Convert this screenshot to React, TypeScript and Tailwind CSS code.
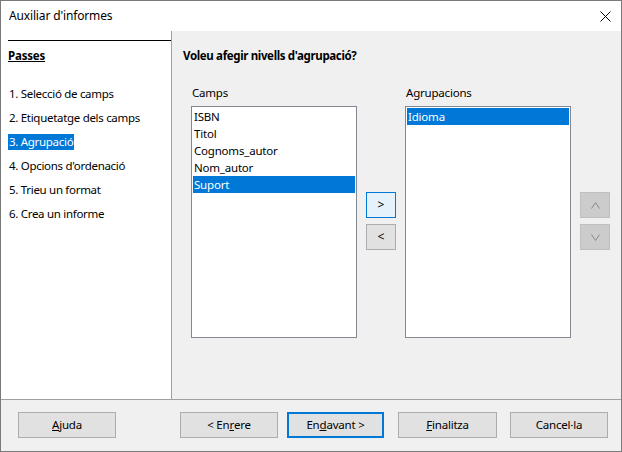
import React from "react";

const font = { fontFamily: '"Noto Sans", "Open Sans", sans-serif' };

function Btn({ children, w = "w-[98px]", primary = false, cls = "" }: { children: React.ReactNode; w?: string; primary?: boolean; cls?: string }) {
  return (
    <div
      className={`${w} h-[26px] flex items-center justify-center text-[11.5px] tracking-[-0.2px] text-black bg-[#e1e1e1] ${
        primary ? "border-2 border-[#0078d7]" : "border border-[#adadad]"
      } ${cls}`}
    >
      {children}
    </div>
  );
}

function ListBox({ items, selected }: { items: string[]; selected: number }) {
  return (
    <div className="w-[166px] h-[232px] border border-[#828790] bg-white p-px">
      {items.map((it, i) => (
        <div
          key={it}
          className={`h-[17px] flex items-center pl-[1px] text-[11.5px] tracking-[-0.2px] leading-none ${
            i === selected ? "bg-[#0078d7] text-white" : "text-black"
          }`}
        >
          {it}
        </div>
      ))}
    </div>
  );
}

export default function App() {
  const steps = [
    "1. Selecció de camps",
    "2. Etiquetatge dels camps",
    "3. Agrupació",
    "4. Opcions d'ordenació",
    "5. Trieu un format",
    "6. Crea un informe",
  ];
  return (
    <div className="w-[622px] h-[452px] border border-[#7a7a7a] bg-white flex flex-col overflow-hidden" style={font}>
      <div className="h-[30px] flex items-center justify-between pl-[8px] pr-[10px] shrink-0">
        <span className="text-[12px] tracking-[-0.15px] text-black">Auxiliar d'informes</span>
        <svg width="11" height="11" viewBox="0 0 11 11">
          <path d="M0.5 0.5 L10.5 10.5 M10.5 0.5 L0.5 10.5" stroke="#000" strokeWidth="1" />
        </svg>
      </div>
      <div className="flex flex-1 min-h-0">
        <div className="w-[171px] shrink-0 bg-white border-r border-[#a0a0a0] pl-[7px] pt-[9px] flex flex-col">
          <div className="h-px bg-black" />
          <div className="mt-[7px] h-[16px] flex items-center text-[11.5px] tracking-[-0.2px] font-bold underline text-black">Passes</div>
          <div className="mt-[18px] flex flex-col">
            {steps.map((s, i) => (
              <div key={s} className="h-[24px] flex items-center">
                <span
                  className={`h-[16px] flex items-center pl-[1px] pr-[1px] text-[11.5px] tracking-[-0.3px] ${
                    i === 2 ? "bg-[#0078d7] text-white" : "text-black"
                  }`}
                >
                  {s}
                </span>
              </div>
            ))}
          </div>
        </div>
        <div className="flex-1 bg-[#f0f0f0] pl-[11px] pt-[17px] flex flex-col">
          <div className="h-[16px] flex items-center text-[11.5px] tracking-[-0.35px] font-bold text-black">Voleu afegir nivells d'agrupació?</div>
          <div className="mt-[21px] ml-[8px] flex">
            <div className="flex flex-col">
              <div className="h-[16px] flex items-center text-[11.5px] tracking-[-0.2px] text-black pl-[1px]">Camps</div>
              <div className="mt-[5px]">
                <ListBox items={["ISBN", "Titol", "Cognoms_autor", "Nom_autor", "Suport"]} selected={4} />
              </div>
            </div>
            <div className="ml-[9px] mt-[107px] flex flex-col gap-[6px]">
              <div className="w-[30px] h-[26px] flex items-center justify-center text-[12px] bg-[#e5f1fb] border border-[#0078d7] text-black">&gt;</div>
              <div className="w-[30px] h-[26px] flex items-center justify-center text-[12px] bg-[#e1e1e1] border border-[#adadad] text-black">&lt;</div>
            </div>
            <div className="ml-[9px] flex flex-col">
              <div className="h-[16px] flex items-center text-[11.5px] tracking-[-0.2px] text-black pl-[1px]">Agrupacions</div>
              <div className="mt-[5px]">
                <ListBox items={["Idioma"]} selected={0} />
              </div>
            </div>
            <div className="ml-[9px] mt-[107px] flex flex-col gap-[6px]">
              <div className="w-[30px] h-[26px] flex items-center justify-center bg-[#cccccc] border border-[#bfbfbf]">
                <svg width="9" height="7" viewBox="0 0 9 7">
                  <path d="M0.5 6.5 L4.5 0.5 L8.5 6.5" fill="none" stroke="#8a8a8a" strokeWidth="1" />
                </svg>
              </div>
              <div className="w-[30px] h-[26px] flex items-center justify-center bg-[#cccccc] border border-[#bfbfbf]">
                <svg width="9" height="7" viewBox="0 0 9 7">
                  <path d="M0.5 0.5 L4.5 6.5 L8.5 0.5" fill="none" stroke="#8a8a8a" strokeWidth="1" />
                </svg>
              </div>
            </div>
          </div>
        </div>
      </div>
      <div className="h-[52px] shrink-0 border-t border-[#a0a0a0] bg-[#f0f0f0] flex items-start pt-[12px] pl-[17px]">
        <Btn>
          <span className="underline">A</span>juda
        </Btn>
        <Btn cls="ml-[64px]">
          &lt; En<span className="underline">r</span>ere
        </Btn>
        <Btn primary w="w-[97px]" cls="ml-[9px]">
          En<span className="underline">d</span>avant &gt;
        </Btn>
        <Btn w="w-[99px]" cls="ml-[14px]">
          <span className="underline">F</span>inalitza
        </Btn>
        <Btn cls="ml-[13px]">Cancel·la</Btn>
      </div>
    </div>
  );
}
